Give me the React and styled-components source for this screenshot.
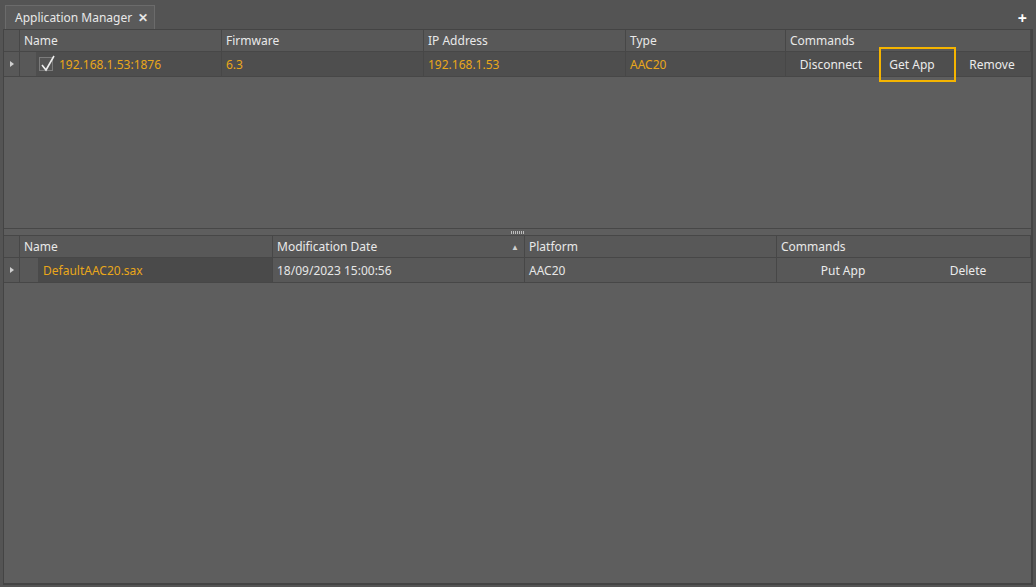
import React from 'react';
import styled, { createGlobalStyle } from 'styled-components';

const GlobalStyle = createGlobalStyle`
  html, body {
    margin: 0;
    padding: 0;
    background: #545454;
    font-family: "Noto Sans", "Open Sans", sans-serif;
    font-size: 12px;
    color: #e6e6e6;
  }
  * { box-sizing: border-box; }
`;

const ORANGE = '#e9a71a';
const LINE = '#474747';

const Page = styled.div`
  width: 1036px;
  height: 587px;
  display: flex;
  flex-direction: column;
`;

const TabStrip = styled.div`
  height: 29px;
  display: flex;
  align-items: flex-end;
  padding: 0 9px 0 5px;
  background: #545454;
`;

const Tab = styled.div`
  height: 24px;
  width: 150px;
  display: flex;
  align-items: center;
  padding: 0 0 0 9px;
  background: #5a5a5a;
  border: 1px solid #6b6b6b;
  border-bottom: none;
  color: #e8e8e8;
  font-size: 12px;
  white-space: nowrap;
`;

const TabTitle = styled.span`
  flex: 1;
`;

const TabClose = styled.span`
  width: 16px;
  font-size: 12px;
  font-weight: 700;
  color: #e6e6e6;
`;

const AddTab = styled.span`
  margin-left: auto;
  align-self: center;
  margin-top: 6px;
  font-size: 16px;
  font-weight: 700;
  color: #fff;
  line-height: 1;
`;

const Frame = styled.div`
  margin: 0 3px;
  height: 556px;
  border: 1px solid #444;
  border-right-width: 2px;
  border-bottom-width: 2px;
  background: #5e5e5e;
  display: flex;
  flex-direction: column;
`;

const Pane = styled.div`
  height: ${({ h }) => (h ? `${h}px` : 'auto')};
  flex: ${({ h }) => (h ? 'none' : 1)};
  background: #5e5e5e;
  border-top: ${({ top }) => (top ? `1px solid ${LINE}` : 'none')};
  border-bottom: ${({ bottom }) => (bottom ? `1px solid ${LINE}` : 'none')};
`;

const Splitter = styled.div`
  height: 6px;
  display: flex;
  justify-content: center;
  align-items: center;
  background: #5e5e5e;
`;

const Grip = styled.div`
  width: 14px;
  height: 3px;
  background: repeating-linear-gradient(90deg, #bdbdbd 0 1px, transparent 1px 2px);
`;

const Grid = styled.div`
  display: grid;
  grid-template-columns: ${({ cols }) => cols};
`;

const HeadCell = styled.div`
  height: 22px;
  display: flex;
  align-items: center;
  padding-left: 4px;
  background: #585858;
  border-right: 1px solid ${LINE};
  border-bottom: 1px solid ${LINE};
  color: #e9e9e9;
  white-space: nowrap;
  &:last-child { border-right: none; }
`;

const SortArrow = styled.span`
  margin-left: auto;
  margin-right: 5px;
  font-size: 8px;
  color: #cfcfcf;
`;

const Cell = styled.div`
  height: ${({ h }) => h}px;
  display: flex;
  align-items: center;
  padding-left: ${({ pad }) => (pad != null ? pad : 4)}px;
  background: ${({ dark }) => (dark ? '#4e4e4e' : '#585858')};
  border-right: 1px solid ${LINE};
  border-bottom: 1px solid ${LINE};
  color: ${({ accent }) => (accent ? ORANGE : '#e6e6e6')};
  white-space: nowrap;
  &:last-child { border-right: none; }
`;

const Indicator = styled.div`
  height: ${({ h }) => h}px;
  display: flex;
  align-items: center;
  justify-content: center;
  background: #585858;
  border-right: 1px solid ${LINE};
  border-bottom: 1px solid ${LINE};
  &::before {
    content: '';
    border-left: 4px solid #cfcfcf;
    border-top: 3px solid transparent;
    border-bottom: 3px solid transparent;
  }
`;

const NameCell = styled.div`
  height: ${({ h }) => h}px;
  display: flex;
  background: #585858;
  border-right: 1px solid ${LINE};
  border-bottom: 1px solid ${LINE};
  padding-left: ${({ indent }) => indent}px;
`;

const NameValue = styled.div`
  flex: 1;
  display: flex;
  align-items: center;
  padding-left: ${({ pad }) => pad}px;
  background: ${({ selected }) => (selected ? '#4e4e4e' : '#4a4a4a')};
  color: ${ORANGE};
  white-space: nowrap;
`;

const CheckBox = styled.span`
  width: 14px;
  height: 14px;
  margin-right: 6px;
  border: 1px solid #7c7c7c;
  background: #555;
  position: relative;
  svg { position: absolute; left: 0; top: -3px; }
`;

const Commands = styled.div`
  display: flex;
  align-items: center;
  gap: ${({ gap }) => gap}px;
  padding-left: ${({ pad }) => pad}px;
  height: 100%;
`;

const CmdButton = styled.span`
  width: ${({ w }) => w}px;
  text-align: center;
  color: #ebebeb;
  position: relative;
`;

// orange focus frame around the active command
const Highlight = styled.span`
  position: absolute;
  left: 5px;
  top: -9px;
  width: 77px;
  height: 35px;
  border: 2px solid #f5b400;
`;

const CheckMark = () => (
  <svg width="16" height="18" viewBox="0 0 16 18">
    <path d="M2 10 L6 15 L14 1" fill="none" stroke="#eeeeee" strokeWidth="1.6" />
  </svg>
);

const Devices = () => (
  <Grid cols="16px 202px 202px 202px 160px 1fr">
    <HeadCell />
    <HeadCell>Name</HeadCell>
    <HeadCell>Firmware</HeadCell>
    <HeadCell>IP Address</HeadCell>
    <HeadCell>Type</HeadCell>
    <HeadCell>Commands</HeadCell>

    <Indicator h={25} />
    <NameCell h={25} indent={16}>
      <NameValue pad={3} selected>
        <CheckBox><CheckMark /></CheckBox>
        192.168.1.53:1876
      </NameValue>
    </NameCell>
    <Cell h={25} dark accent>6.3</Cell>
    <Cell h={25} dark accent>192.168.1.53</Cell>
    <Cell h={25} dark accent>AAC20</Cell>
    <Cell h={25} dark pad={0}>
      <Commands gap={5} pad={7}>
        <CmdButton w={76}>Disconnect</CmdButton>
        <CmdButton w={76}>
          Get App
          <Highlight />
        </CmdButton>
        <CmdButton w={74}>Remove</CmdButton>
      </Commands>
    </Cell>
  </Grid>
);

const Apps = () => (
  <Grid cols="16px 253px 252px 252px 1fr">
    <HeadCell />
    <HeadCell>Name</HeadCell>
    <HeadCell>
      Modification Date
      <SortArrow>▲</SortArrow>
    </HeadCell>
    <HeadCell>Platform</HeadCell>
    <HeadCell>Commands</HeadCell>

    <Indicator h={25} />
    <NameCell h={25} indent={18}>
      <NameValue pad={5}>DefaultAAC20.sax</NameValue>
    </NameCell>
    <Cell h={25}>18/09/2023 15:00:56</Cell>
    <Cell h={25}>AAC20</Cell>
    <Cell h={25} pad={0}>
      <Commands gap={25} pad={16}>
        <CmdButton w={100}>Put App</CmdButton>
        <CmdButton w={100}>Delete</CmdButton>
      </Commands>
    </Cell>
  </Grid>
);

export default function App() {
  return (
    <Page>
      <GlobalStyle />
      <TabStrip>
        <Tab>
          <TabTitle>Application Manager</TabTitle>
          <TabClose>✕</TabClose>
        </Tab>
        <AddTab>+</AddTab>
      </TabStrip>
      <Frame>
        <Pane h={199} bottom>
          <Devices />
        </Pane>
        <Splitter>
          <Grip />
        </Splitter>
        <Pane top>
          <Apps />
        </Pane>
      </Frame>
    </Page>
  );
}
